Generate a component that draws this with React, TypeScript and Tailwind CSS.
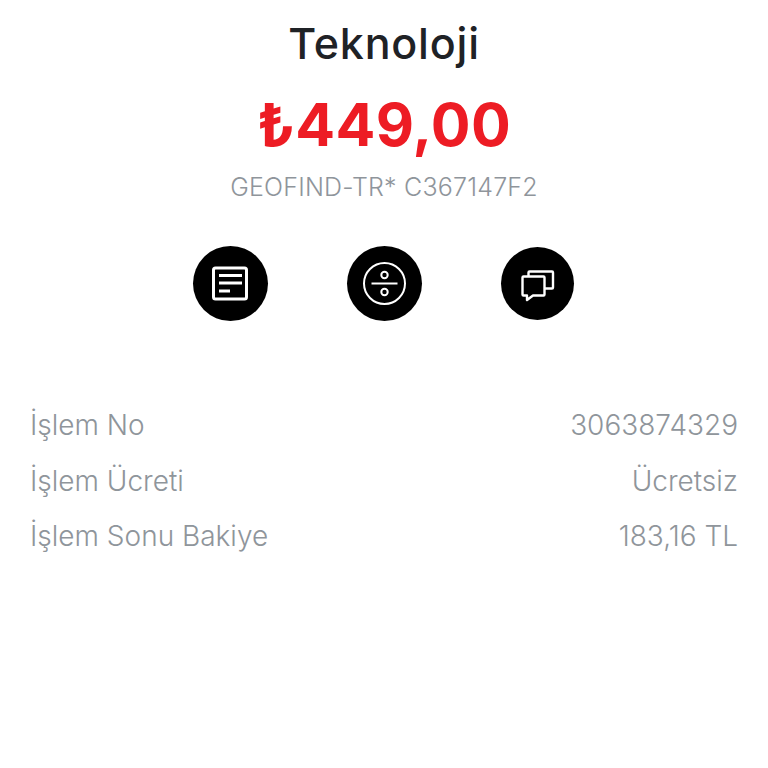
import React from "react";

const rows = [
  { label: "İşlem No", value: "3063874329" },
  { label: "İşlem Ücreti", value: "Ücretsiz" },
  { label: "İşlem Sonu Bakiye", value: "183,16 TL" },
];

function ReceiptIcon() {
  return (
    <svg width="75" height="75" viewBox="0 0 75 75" fill="none" stroke="white">
      <rect x="20.5" y="22" width="33" height="31" rx="2" strokeWidth="3" />
      <path d="M26 29.500h23M26 37h23M26 45h11" strokeWidth="3" />
    </svg>
  );
}

function DivideIcon() {
  return (
    <svg width="75" height="75" viewBox="0 0 75 75" fill="none" stroke="white">
      <circle cx="37.5" cy="37.5" r="20.500" strokeWidth="2" />
      <path d="M24.500 37.500h26" strokeWidth="2" />
      <circle cx="37.5" cy="29" r="3.200" strokeWidth="2" />
      <circle cx="37.5" cy="46" r="3.200" strokeWidth="2" />
    </svg>
  );
}

function ChatIcon() {
  return (
    <svg width="73" height="73" viewBox="0 0 73 73" fill="none" stroke="white" strokeWidth="2.4" strokeLinejoin="round">
      <path d="M22.500 29.500h20a1 1 0 0 1 1 1v17a1 1 0 0 1-1 1H32l-6 4.500v-4.500h-3.500a1 1 0 0 1-1-1v-17a1 1 0 0 1 1-1z" />
      <path d="M27.500 29v-3.500a1 1 0 0 1 1-1h22.500a1 1 0 0 1 1 1v15a1 1 0 0 1-1 1H44" />
    </svg>
  );
}

export default function App() {
  return (
    <div className="flex h-[768px] w-[768px] flex-col bg-white font-['Inter',sans-serif]">
      <div className="flex flex-col items-center pt-[14px]">
        <h1 className="text-[43px] leading-[58px] font-medium tracking-[0.8px] text-[#1f2226]">Teknoloji</h1>
        <p className="mt-[15px] text-[59px] leading-[76px] font-bold tracking-[0.3px] text-[#ed1c24]">₺449,00</p>
        <p className="mt-[8px] text-[25px] leading-[32px] font-light tracking-[0.2px] text-[#8f959b]">GEOFIND-TR* C367147F2</p>
      </div>

      <div className="mt-[43px] flex items-center justify-center pr-[1px]">
        <div className="flex h-[75px] w-[75px] items-center justify-center rounded-full bg-black"><ReceiptIcon /></div>
        <div className="ml-[79px] flex h-[75px] w-[75px] items-center justify-center rounded-full bg-black"><DivideIcon /></div>
        <div className="ml-[79px] flex h-[73px] w-[73px] items-center justify-center rounded-full bg-black"><ChatIcon /></div>
      </div>

      <div className="mt-[84px] flex flex-col gap-[15.500px] pr-[30px] pl-[30px]">
        {rows.map((row) => (
          <div key={row.label} className="flex items-center justify-between text-[28px] leading-[40px] font-light text-[#8f959b]">
            <span>{row.label}</span>
            <span>{row.value}</span>
          </div>
        ))}
      </div>
    </div>
  );
}
